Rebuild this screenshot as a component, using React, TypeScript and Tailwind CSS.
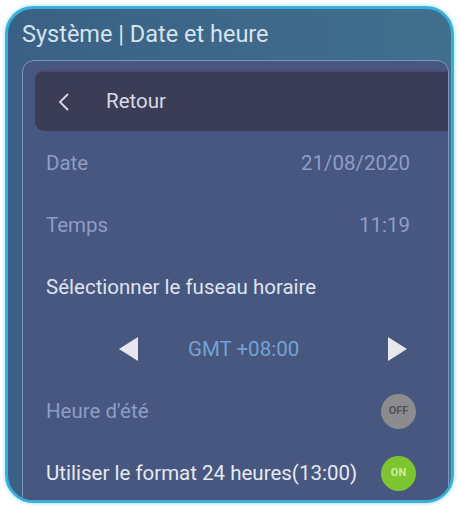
import React from 'react';

const font = { fontFamily: 'Roboto, "Liberation Sans", sans-serif' };

const Toggle = ({ on }: { on: boolean }) => (
  <div
    className={
      on
        ? 'w-[35px] h-[35px] rounded-full bg-[#7cc531] flex items-center justify-center text-[11px] font-bold text-[#c9ef9a]'
        : 'w-[35px] h-[35px] rounded-full bg-[#8c8c8e] flex items-center justify-center text-[11px] font-bold text-[#525256]'
    }
  >
    {on ? 'ON' : 'OFF'}
  </div>
);

const App = () => {
  return (
    <div className="w-[459px] h-[506px] bg-white pt-[6px] pl-[5px]" style={font}>
      <div className="w-[449px] h-[497px] rounded-[28px] border-[3px] border-[#3aaedb] bg-gradient-to-r from-[#3a6185] to-[#416f8c] overflow-hidden flex flex-col shadow-[0_0_4px_#8fdcf5]">
        {/* Title */}
        <div className="h-[51px] shrink-0 flex items-center pl-[14px] pt-[1px] text-[23.5px] text-[#d6e3ee]">
          Système | Date et heure
        </div>

        {/* Panel */}
        <div className="flex-1 ml-[14px] mr-[2px] rounded-t-[12px] border border-[#7f93c0] bg-[#47577f] pt-[9px] flex flex-col text-[20.5px]">
          <div className="h-[61px] shrink-0 ml-[12px] rounded-l-[9px] bg-[#3a3d55] border-t-2 border-[#4d4a78] flex items-center text-[#d8dae6]">
            <svg width="14" height="20" viewBox="0 0 14 20" className="ml-[22px]">
              <path d="M11 2 L3 10 L11 18" stroke="#d8dae6" strokeWidth="1.8" fill="none" />
            </svg>
            <span className="ml-[35px]">Retour</span>
          </div>

          <div className="h-[62px] shrink-0 mt-[1px] flex items-center justify-between pl-[23px] pr-[38px] text-[#8e9dc6]">
            <span>Date</span>
            <span>21/08/2020</span>
          </div>
          <div className="h-[62px] shrink-0 flex items-center justify-between pl-[23px] pr-[38px] text-[#8e9dc6]">
            <span>Temps</span>
            <span>11:19</span>
          </div>
          <div className="h-[62px] shrink-0 flex items-center pl-[23px] text-[#dfe3f0]">
            Sélectionner le fuseau horaire
          </div>
          <div className="h-[62px] shrink-0 flex items-center">
            <svg width="19" height="24" viewBox="0 0 19 24" className="ml-[96px]">
              <path d="M19 0 L0 12 L19 24 Z" fill="#e6e7ef" />
            </svg>
            <span className="ml-[50px] text-[#72a3d4]">GMT +08:00</span>
            <svg width="19" height="24" viewBox="0 0 19 24" className="ml-auto mr-[41px]">
              <path d="M0 0 L19 12 L0 24 Z" fill="#e6e7ef" />
            </svg>
          </div>
          <div className="h-[62px] shrink-0 flex items-center justify-between pl-[23px] pr-[32px] text-[#8e9dc6]">
            <span>Heure d'été</span>
            <Toggle on={false} />
          </div>
          <div className="h-[62px] shrink-0 flex items-center justify-between pl-[23px] pr-[32px] text-[#e6e9f4]">
            <span>Utiliser le format 24 heures(13:00)</span>
            <Toggle on={true} />
          </div>
        </div>
      </div>
    </div>
  );
};

export default App;
